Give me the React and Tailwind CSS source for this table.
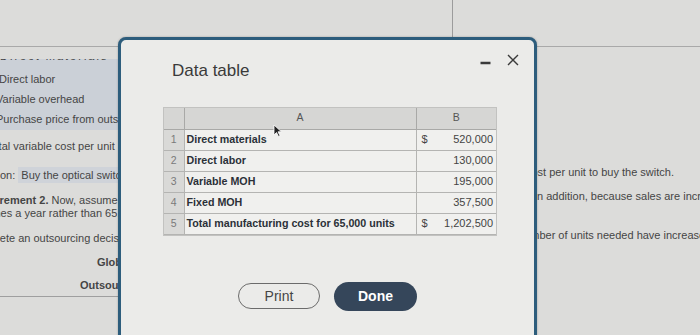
const rows = [
  { n: 1, label: "Direct materials", dollar: true, value: "520,000" },
  { n: 2, label: "Direct labor", dollar: false, value: "130,000" },
  { n: 3, label: "Variable MOH", dollar: false, value: "195,000" },
  { n: 4, label: "Fixed MOH", dollar: false, value: "357,500" },
  { n: 5, label: "Total manufacturing cost for 65,000 units", dollar: true, value: "1,202,500" },
];

function DataTable() {
  return (
    <div className="ml-[42px] mt-[26px] w-[334px] border border-[#c2c2c0] bg-[#f0f0ee]">
      <table className="w-full border-collapse text-[#2b3038]">
        <thead>
          <tr className="h-[21px] bg-[#d6d6d4] text-[10.5px] text-[#555]">
            <th className="w-[20px] border-r border-b border-[#a9a9a7] font-normal"></th>
            <th className="border-r border-b border-[#a9a9a7] font-normal">A</th>
            <th className="w-[80px] border-b border-[#a9a9a7] font-normal">B</th>
          </tr>
        </thead>
        <tbody>
          {rows.map((r) => (
            <tr key={r.n} className="h-[21px]">
              <td className="bg-[#d9d9d7] border-r border-b border-[#b4b4b2] text-center text-[10.5px] text-[#7a7a7a]">
                {r.n}
              </td>
              <td className="border-r border-b border-[#b4b4b2] pl-[2px] text-[10.7px] font-bold whitespace-nowrap">
                {r.label}
              </td>
              <td className="border-b border-[#b4b4b2] pl-[5px] pr-[3px] text-[11px] text-[#444]">
                <div className="flex justify-between">
                  <span>{r.dollar ? "$" : ""}</span>
                  <span>{r.value}</span>
                </div>
              </td>
            </tr>
          ))}
        </tbody>
      </table>
    </div>
  );
}

export default function App() {
  return (
    <div className="relative w-[700px] h-[335px] overflow-hidden bg-[#dcdcda] font-['Liberation_Sans',Arial,sans-serif] text-[#454545]">
      {/* page behind the dialog */}
      <div className="flex h-[47px] border-b border-[#a9a9a9]">
        <div className="ml-[452px] h-[42px] w-px bg-[#9c9c9c]" />
      </div>
      <div className="flex text-[11px] whitespace-nowrap">
        <div className="w-[122px] overflow-hidden">
          <div className="mt-[12px] bg-[#cbd0d7] pb-[1px]">
            <div className="h-[4px] overflow-hidden">
              <div className="mt-[-9px] leading-[12px] tracking-[2px]">Direct materials</div>
            </div>
            <div className="h-[6px]" />
            <div className="h-[20px] leading-[20px] ml-[-1px]">Direct labor</div>
            <div className="h-[20px] leading-[20px] ml-[-4px]">Variable overhead</div>
            <div className="h-[20px] leading-[20px] ml-[-4px]">Purchase price from outside supplier</div>
          </div>
          <div className="mt-[6px] h-[20px] leading-[20px] ml-[-13px]">Total variable cost per unit</div>
          <div className="mt-[10px] h-[18px] leading-[18px] ml-[-30px]">
            Decision:{" "}
            <span className="bg-[#cfd3d9] px-[3px] py-[2px]">Buy the optical switch</span>
          </div>
          <div className="mt-[10px] leading-[13px]">
            <div className="ml-[-31px]">
              <span className="font-bold">Requirement 2.</span> Now, assume
            </div>
            <div className="ml-[-30px]">switches a year rather than 65,000</div>
          </div>
          <div className="mt-[11px] h-[14px] leading-[14px] ml-[-32px]">Complete an outsourcing decision</div>
          <div className="mt-[10px] h-[14px] leading-[14px] pl-[97px] font-bold">Global</div>
          <div className="mt-[9px] h-[14px] leading-[14px] pl-[80px] font-bold border-b border-[#9f9f9f] pb-[4px] box-content">
            Outsource
          </div>
        </div>
        <div className="flex-1" />
        <div className="w-[163px] overflow-hidden">
          <div className="mt-[118px] h-[14px] leading-[14px] ml-[-11px]">cost per unit to buy the switch.</div>
          <div className="mt-[10px] h-[14px] leading-[14px] ml-[-3px]">In addition, because sales are increasing</div>
          <div className="mt-[25px] h-[14px] leading-[14px] ml-[-19px]">number of units needed have increased</div>
        </div>
      </div>

      {/* dialog */}
      <div className="absolute left-[118px] top-[37px] w-[419px] h-[320px] rounded-t-[8px] border-[3px] border-[#2d5d7c] bg-[#ebebe9] shadow-[0_0_2px_rgba(0,0,0,0.3)]">
        <div className="flex items-start justify-between pt-[12px] pr-[15px]">
          <h2 className="ml-[51px] mt-[9px] text-[17px] leading-[20px] text-[#3a3a3a]">Data table</h2>
          <div className="flex items-center gap-[16px]">
            <svg width="11" height="14" viewBox="0 0 11 14" className="mt-[2px]">
              <path d="M0.5 9h10" stroke="#3a3a3a" strokeWidth="2.5" />
            </svg>
            <svg width="12" height="12" viewBox="0 0 12 12">
              <path d="M1 1l10 10M11 1L1 11" stroke="#3a3a3a" strokeWidth="1.4" />
            </svg>
          </div>
        </div>

        <DataTable />

        <div className="mt-[46px] flex items-center justify-center gap-[14px]">
          <button className="w-[82px] h-[26px] rounded-full border-[1.5px] border-[#6b6b6b] text-[14px] text-[#454545]">
            Print
          </button>
          <button className="w-[83px] h-[29px] rounded-full bg-[#35465a] text-[14px] font-semibold text-white">
            Done
          </button>
        </div>
      </div>

      {/* mouse cursor */}
      <svg className="absolute left-[273px] top-[124px]" width="10" height="14" viewBox="0 0 10 14">
        <path d="M1 1v10l2.5-2.5 2 4 1.5-.7-2-4H8.5z" fill="#222" stroke="#fff" strokeWidth="0.8" />
      </svg>
    </div>
  );
}
